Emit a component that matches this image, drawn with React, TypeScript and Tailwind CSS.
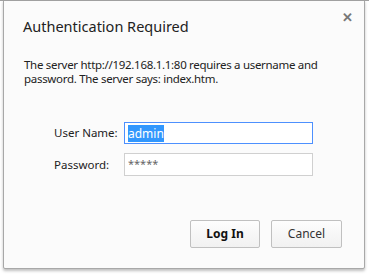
import { useEffect, useRef } from "react";

const font = { fontFamily: '"Noto Sans", "Open Sans", sans-serif' };

const App = () => {
    const userRef = useRef<HTMLInputElement>(null);

    useEffect(() => {
        userRef.current?.focus();
        userRef.current?.select();
    }, []);

    return (
        <div className="w-[369px] h-[275px] bg-white border-t border-[#a0a0a0] overflow-hidden" style={font}>
            <div className="relative ml-[3px] w-[362px] h-[269px] -mt-px bg-[#fbfbfb] border border-[#a8a8a8] rounded-b-[2px] shadow-[0_2px_3px_rgba(0,0,0,0.25)]">
                <button className="absolute right-[11px] top-[10px] text-[#777] text-[13px] font-bold leading-none">✕</button>

                <h1 className="pl-[19px] pt-[15px] text-[14.5px] leading-[20px] text-[#222]">Authentication Required</h1>

                <p className="pl-[20px] pr-[10px] mt-[22px] text-[11.5px] leading-[14px] tracking-[-0.3px] text-[#222]">
                    The server http://192.168.1.1:80 requires a username and
                    <br />
                    password. The server says: index.htm.
                </p>

                <div className="mt-[36px] grid grid-cols-[70px_189px] gap-y-[9px] pl-[50px] items-center text-[11.5px] text-[#222]">
                    <label>User Name:</label>
                    <input
                        ref={userRef}
                        defaultValue="admin"
                        className="h-[22px] border border-[#4d90fe] bg-white px-[3px] text-[12px] outline-none selection:bg-[#3297fd] selection:text-white"
                    />
                    <label>Password:</label>
                    <input
                        defaultValue="*****"
                        className="h-[23px] border border-[#d0d0d0] bg-white px-[3px] pb-[3px] text-[11px] text-[#666] outline-none"
                    />
                </div>

                <div className="flex justify-end gap-[11px] pr-[22px] mt-[44px]">
                    <button className="w-[70px] h-[28px] border border-[#c0c0c0] rounded-[2px] bg-gradient-to-b from-[#fdfdfd] to-[#f1f1f1] text-[12px] font-bold text-[#111]">
                        Log In
                    </button>
                    <button className="w-[71px] h-[28px] border border-[#c0c0c0] rounded-[2px] bg-gradient-to-b from-[#fdfdfd] to-[#f1f1f1] text-[12px] text-[#333]">
                        Cancel
                    </button>
                </div>
            </div>
        </div>
    );
};

export default App;
